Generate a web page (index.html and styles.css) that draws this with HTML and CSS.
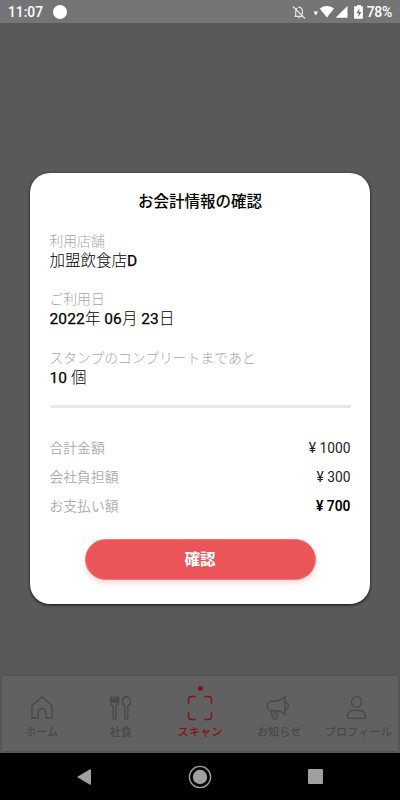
FILE: index.html
```html
<!DOCTYPE html>
<html lang="ja">
<head>
<meta charset="utf-8">
<title>お会計情報の確認</title>
<link rel="stylesheet" href="styles.css">
</head>
<body>
<div class="screen">
  <header class="status">
    <span class="clock">11:07</span>
    <span class="dot"></span>
    <svg class="indicators" width="74" height="20" viewBox="0 0 74 20">
      <g fill="none" stroke="#e6e6e6" stroke-width="1.2">
        <path d="M3.500 14.300h9.200M4.700 14V9.400q0-2.200 1.500-3.300M7.400 5.500q4-.5 4 4.200v2.500M8.100 5.300V4.200M8.100 15v1.500M2 4.500L14 16.500"/>
      </g>
      <path d="M22.500 9.500h4.500l-2.250 4z" fill="#fff"/>
      <path d="M28.700 6.500q7.200-4.800 14.400 0L35.900 15.500z" fill="#fff"/>
      <path d="M56.500 4v11.800H44.500z" fill="#fff"/>
      <path d="M64 4.200h2V3h4v1.200h1q.9 0 .9.900v10.800q0 .9-.9.900h-7q-.9 0-.9-.9V5.100q0-.9.900-.9z" fill="#fff"/>
      <path d="M68.300 6.500l-2.800 4.800h2v3.600l2.900-5h-2.100z" fill="#777"/>
    </svg>
    <span class="percent">78%</span>
  </header>

  <main class="backdrop">
    <section class="card">
      <h1 class="title">お会計情報の確認</h1>
      <dl class="details">
        <div class="detail"><dt>利用店舗</dt><dd>加盟飲食店<b>D</b></dd></div>
        <div class="detail"><dt>ご利用日</dt><dd><b>2022</b>年 <b>06</b>月 <b>23</b>日</dd></div>
        <div class="detail"><dt>スタンプのコンプリートまであと</dt><dd><b>10</b> 個</dd></div>
      </dl>
      <hr class="rule">
      <dl class="amounts">
        <div class="amount"><dt>合計金額</dt><dd>¥ 1000</dd></div>
        <div class="amount"><dt>会社負担額</dt><dd>¥ 300</dd></div>
        <div class="amount total"><dt>お支払い額</dt><dd>¥ 700</dd></div>
      </dl>
      <button class="confirm">確認</button>
    </section>
  </main>

  <nav class="tabs">
    <div class="tab">
      <svg class="icon" viewBox="0 0 26 26"><path d="M3 10.500L13 2l10 8.500V23h-6v-5.500a4 4 0 0 0-8 0V23H3z"/></svg>
      <span>ホーム</span>
    </div>
    <div class="tab">
      <svg class="icon" viewBox="0 0 26 26"><path d="M2.500 2.200v5.300q0 3 2.600 3.300V23q0 1.300 1.400 1.300T7.900 23V10.800q2.600-.3 2.600-3.300V2.200H9.100V7H7.200V2.200H5.800V7H3.900V2.200zM18.500 2c-2.600 0-4 2.300-4 4.800 0 2.200 1 3.800 2.300 4.200V23q0 1.300 1.500 1.300t1.500-1.300V11c1.500-.5 2.700-2 2.700-4.200 0-2.500-1.400-4.800-4-4.800z"/></svg>
      <span>社食</span>
    </div>
    <div class="tab active">
      <svg class="icon" viewBox="0 0 26 26"><path d="M1.500 8V4.500q0-3 3-3H8M18 1.500h3.500q3 0 3 3V8M24.500 18v3.500q0 3-3 3H18M8 24.500H4.500q-3 0-3-3V18"/></svg>
      <span>スキャン</span>
    </div>
    <div class="tab">
      <svg class="icon" viewBox="0 0 26 26"><path d="M6 6.200h4q5-.5 9-4.300v18Q15 15.900 10 15.700H6a4.750 4.750 0 0 1 0-9.500zM19 7q3.300.7 3.300 3.900T19 14.800M4.500 15.700L7 22.800q.8 2 2.800 1.500 1.700-.7 1.200-2.800V15.700M8.500 16v3.500"/></svg>
      <span>お知らせ</span>
    </div>
    <div class="tab">
      <svg class="icon" viewBox="0 0 26 26"><ellipse cx="11.500" cy="7" rx="5" ry="5.400"/><path d="M2.500 21.800c0-4 3-6.500 6-6.500h6c3 0 6 2.500 6 6.500q0 1.600-2 1.600h-14q-2 0-2-1.600z"/></svg>
      <span>プロフィール</span>
    </div>
  </nav>

  <footer class="system">
    <svg width="14" height="18" viewBox="0 0 14 18"><path d="M0 9L13 1.200q1-.3 1 .8v14q0 1-1 .8z" fill="#a0a0a0"/></svg>
    <svg width="24" height="24" viewBox="0 0 24 24"><circle cx="12" cy="12" r="10.600" fill="none" stroke="#a0a0a0" stroke-width="1.300"/><circle cx="12" cy="12" r="7.200" fill="#a0a0a0"/></svg>
    <svg width="15" height="15" viewBox="0 0 15 15"><rect width="15" height="15" rx="1" fill="#a0a0a0"/></svg>
  </footer>
</div>
</body>
</html>
```
FILE: styles.css
```css
* { box-sizing: border-box; }
body, h1, dl, dd { margin: 0; }
body { font-family: Roboto, "Noto Sans CJK JP", sans-serif; color: #000; }
.screen { width: 400px; height: 800px; display: flex; flex-direction: column; overflow: hidden; background: #595959; }

.status { height: 23px; flex: none; display: flex; align-items: center; padding: 1px 8px 0 8px; background: #757575; color: #fff; font-size: 13.800px; font-weight: 500; }
.dot { width: 14px; height: 14px; margin: 0 0 0 10px; border-radius: 50%; background: #fff; }
.indicators { margin: 0 2px 0 auto; flex: none; }
.percent { font-size: 14px; letter-spacing: -.3px; }

.backdrop { flex: 1; padding: 150px 30px 0; }
.card { height: 431px; padding: 17px 19.500px 0; border-radius: 20px; background: #fff; box-shadow: 0 1px 3px rgba(0,0,0,.85); }
.title { font-size: 15.500px; line-height: 24px; font-weight: 500; text-align: center; }
.details { padding-top: 17.500px; }
.detail { height: 58.500px; font-size: 13.800px; line-height: 18px; }
.detail dt { color: #a6a6a6; font-weight: 300; }
.detail dd { padding-top: 2px; font-size: 15.500px; line-height: 19px; font-weight: 300; }
.detail b { font-weight: 400; letter-spacing: .15px; -webkit-text-stroke: .25px #000; }
.rule { height: 3px; margin: -2px 0 26px; border: 0; background: #e8e8e8; }
.amount { display: flex; justify-content: space-between; height: 29.200px; line-height: 29.200px; font-size: 13.800px; font-weight: 400; }
.amount dt { color: #acacac; font-weight: 350; }
.amount dd { color: #222; }
.amount.total dd { color: #000; font-weight: 600; }
.confirm { display: block; width: 231px; height: 41px; margin: 17px auto 0; padding: 0 0 2px; border: 1px solid #f07a7a; border-radius: 21px; background: #eb5558; color: #fff; font: 700 15.500px Roboto, "Noto Sans CJK JP", sans-serif; box-shadow: 0 3px 6px rgba(235,85,88,.22); }

.tabs { height: 75px; flex: none; display: grid; grid-template-columns: repeat(5, 79.200px); justify-content: center; margin: 0 2px 2px; background: #616161; box-shadow: 0 0 2px #494949; }
.tab { position: relative; display: flex; flex-direction: column; align-items: center; padding-top: 18px; font-size: 11.200px; line-height: 16px; font-weight: 500; color: #494949; white-space: nowrap; }
.icon { width: 26px; height: 26px; margin: 1px 0 4px; fill: none; stroke: #474747; stroke-width: 1.300; stroke-linejoin: round; stroke-linecap: round; }
.active { color: #821316; font-weight: 500; }
.active .icon { stroke: #821316; stroke-width: 1.500; }
.active::before { content: ""; position: absolute; top: 10px; width: 5px; height: 5px; border-radius: 50%; background: #821316; }

.system { height: 47px; flex: none; display: flex; align-items: center; justify-content: space-between; padding: 0 77px; background: #000; }
```
